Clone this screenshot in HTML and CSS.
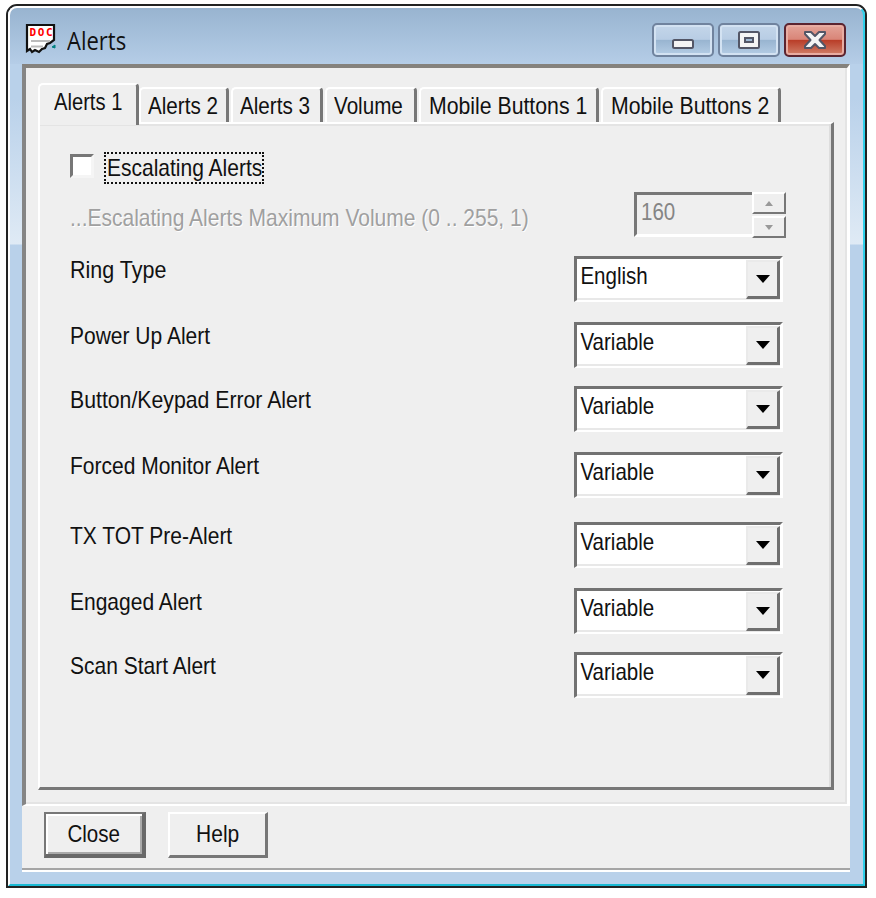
FILE: index.html
```
<!DOCTYPE html>
<html lang="en">
<head>
<meta charset="utf-8">
<title>Alerts</title>
<link rel="stylesheet" href="styles.css">
</head>
<body>
<div class="window">
  <div class="glass">
    <header class="titlebar">
      <svg class="doc" width="32" height="32" viewBox="0 0 32 32">
        <path d="M2 2H29V17L25 20L22 21L20 25L17 26L14 29L10 27L7 29L5 26L2 28Z" fill="#fff" stroke="#111" stroke-width="2.2"/>
        <path d="M6 18H25M6 23.500H18" stroke="#bbb" stroke-width="2"/>
        <path d="M27 24L30 22V25Z" fill="#008080" stroke="#008080"/>
        <text class="doc-text" x="4.500" y="13" textLength="23">DOC</text>
      </svg>
      <h1 class="title">Alerts</h1>
      <div class="captions">
        <span class="cap"><svg width="58" height="30" viewBox="0 0 58 30"><rect x="19" y="15" width="20" height="8" rx="1.500" fill="#f4f4f4" stroke="#535666" stroke-width="2"/></svg></span>
        <span class="cap"><svg width="58" height="30" viewBox="0 0 58 30"><rect x="19" y="7" width="20" height="16" rx="1.500" fill="#f4f4f4" stroke="#535666" stroke-width="2"/><rect x="25" y="13" width="8" height="4" fill="#9fb9d4" stroke="#535666" stroke-width="2"/></svg></span>
        <span class="cap cap-close"><svg width="58" height="30" viewBox="0 0 58 30"><path d="M19 7H25L29 11L33 7H39V9L33.500 15L39 21V23H33L29 19L25 23H19V21L24.500 15L19 9Z" fill="#f4f4f4" stroke="#535666" stroke-width="2" stroke-linejoin="round"/></svg></span>
      </div>
    </header>
    <main class="client">
      <section class="sunken">
        <nav class="tabs">
          <div class="tab active"><span class="t">Alerts 1</span></div>
          <div class="tab t2"><span class="t">Alerts 2</span></div>
          <div class="tab t3"><span class="t">Alerts 3</span></div>
          <div class="tab t4"><span class="t">Volume</span></div>
          <div class="tab wide"><span class="t">Mobile Buttons 1</span></div>
          <div class="tab wide"><span class="t">Mobile Buttons 2</span></div>
        </nav>
        <div class="page">
          <div class="check"><span class="box"></span><span class="focus"><span class="t">Escalating Alerts</span></span></div>
          <div class="volume">
            <span class="t disabled">...Escalating Alerts Maximum Volume (0 .. 255, 1)</span>
            <div class="spin">
              <div class="field"><span class="t tight">160</span></div>
              <div class="steps">
                <span class="step"><svg width="8" height="5"><path d="M0 5L4 0L8 5Z" fill="#999"/></svg></span>
                <span class="step"><svg width="8" height="5"><path d="M0 0H8L4 5Z" fill="#999"/></svg></span>
              </div>
            </div>
          </div>
          <div class="row ring"><span class="t loose">Ring Type</span><div class="combo"><span class="t tight">English</span><span class="drop"></span></div></div>
          <div class="row"><span class="t">Power Up Alert</span><div class="combo"><span class="t tight">Variable</span><span class="drop"></span></div></div>
          <div class="row near"><span class="t button-label">Button/Keypad Error Alert</span><div class="combo"><span class="t tight">Variable</span><span class="drop"></span></div></div>
          <div class="row"><span class="t">Forced Monitor Alert</span><div class="combo"><span class="t tight">Variable</span><span class="drop"></span></div></div>
          <div class="row far"><span class="t">TX TOT Pre-Alert</span><div class="combo"><span class="t tight">Variable</span><span class="drop"></span></div></div>
          <div class="row"><span class="t">Engaged Alert</span><div class="combo"><span class="t tight">Variable</span><span class="drop"></span></div></div>
          <div class="row near"><span class="t">Scan Start Alert</span><div class="combo"><span class="t tight">Variable</span><span class="drop"></span></div></div>
        </div>
      </section>
      <footer class="footer">
        <div class="button default"><span class="t tight">Close</span></div>
        <div class="button"><span class="t">Help</span></div>
      </footer>
    </main>
  </div>
</div>
</body>
</html>
```
FILE: styles.css
```
* { box-sizing: border-box; }
body {
  margin: 0;
  padding: 4px 0 0 6px;
  background: #fff;
  color: #111;
  font: 24px/28px "Liberation Sans", Arial, sans-serif;
}
.window {
  width: 861px;
  height: 884px;
  border: 2px solid #222;
  border-radius: 11px 11px 0 0;
  background: #b9d1ea;
}
.glass {
  height: 880px;
  padding: 0 12px 0 12px;
  border: 2px solid #fff;
  border-right-color: #2fd0ea;
  border-bottom-color: #19b9d3;
  border-radius: 9px 9px 0 0;
  background:
    linear-gradient(#98b4d0, #b5cde7 56px, transparent 56px),
    linear-gradient(#b9d1ea 56px, #b9d1ea 90px, #dfeaf5 236px, #b9d1ea 237px);
}
.titlebar {
  display: flex;
  height: 56px;
  padding: 15px 5px 0 3px;
}
.doc { flex: none; }
.doc-text {
  font: bold 11px "DejaVu Sans Mono", monospace;
  fill: #f00;
}
.title {
  width: 100px;
  margin: 2px auto 0 10px;
  font: 25px/30px "Open Sans", "Noto Sans", sans-serif;
  transform: scaleX(.88);
  transform-origin: left;
}
.captions { display: flex; gap: 4px; }
.cap {
  width: 62px;
  height: 34px;
  border: 2px solid #70839e;
  border-radius: 5px;
  background: linear-gradient(#c4d6ea, #b8cde4 48%, #98b4d0 50%, #b5cde5);
  box-shadow: inset 0 0 0 2px #d3e2f2;
}
.cap svg { display: block; }
.cap-close {
  border-color: #5b2430;
  background: linear-gradient(#e4a499, #d98578 48%, #b93c27 50%, #d0806a);
  box-shadow: inset 0 0 0 2px #e8aca2;
}
.client {
  width: 828px;
  height: 808px;
  background: #efefef;
  border-bottom: 2px solid #fff;
  box-shadow: inset 0 -2px #a5a5a5;
}
.sunken {
  height: 742px;
  padding: 15px 0 0 14px;
  border: solid;
  border-width: 4px 3px 2px 4px;
  border-color: #85827d #fff #fff #858585;
  box-shadow: inset -2px -2px #e4e4e4;
}
.t {
  display: block;
  white-space: nowrap;
  transform: scaleX(.875);
  transform-origin: left;
}
.t.tight { transform: scaleX(.855); }
.t.loose { transform: scaleX(.895); }
.t.button-label { transform: scaleX(.885); }
.tabs {
  display: flex;
  align-items: flex-end;
  gap: 2px;
  height: 39px;
}
.tab {
  width: 90px;
  height: 35px;
  padding: 3px 0 0 7px;
  border: 2px solid #fff;
  border-right: 3px solid #777;
  border-bottom: 0;
  border-radius: 5px 4px 0 0;
}
.tab .t { transform: scaleX(.86); }
.tab.active {
  position: relative;
  width: 101px;
  height: 42px;
  margin: 0 -2px -3px -2px;
  padding: 3px 0 0 14px;
  background: linear-gradient(90deg, #efefef 97px, #efefef);
}
.tab.active .t { transform: scaleX(.84); }
.tab.t3, .tab.t4 { width: 92px; }
.tab.wide { width: 180px; padding-left: 8px; }
.tab.wide .t { transform: scaleX(.885); }
.page {
  width: 796px;
  height: 668px;
  padding: 28px 0 0 30px;
  margin-left: -2px;
  border: 2px solid #fff;
  border-right: 3px solid #777;
  border-bottom: 3px solid #777;
  box-shadow: inset -2px 0 #ddd, inset 0 2px #e4e4e4;
}
.check { display: flex; gap: 10px; height: 32px; }
.box {
  width: 24px;
  height: 24px;
  margin-top: 2px;
  background: #fff;
  border: 3px solid #777;
  border-right-color: #f5f5f5;
  border-bottom-color: #f5f5f5;
}
.focus {
  width: 160px;
  height: 32px;
  padding-left: 1px;
  border: 2px dotted #111;
}
.volume { display: flex; justify-content: space-between; width: 716px; height: 46px; margin-top: 8px; }
.disabled { width: 560px; margin-top: 12px; color: #a0a0a0; text-shadow: 1px 1px #fff; }
.spin { display: flex; flex: none; width: 152px; height: 46px; }
.field {
  width: 118px;
  height: 45px;
  padding: 3px 0 0 4px;
  border: 3px solid #777;
  border-right: 0;
  border-bottom-color: #fff;
  color: #858585;
}
.steps { display: flex; flex-direction: column; gap: 2px; }
.step {
  display: flex;
  align-items: center;
  justify-content: center;
  width: 34px;
  height: 22px;
  border: 2px solid #fff;
  border-right-color: #777;
  border-bottom-color: #777;
}
.row { display: flex; justify-content: space-between; width: 713px; height: 46px; margin-top: 20px; }
.ring { margin-top: 18px; }
.near { margin-top: 18px; }
.far { margin-top: 24px; }
.combo {
  display: flex;
  justify-content: space-between;
  flex: none;
  width: 209px;
  height: 46px;
  border: 3px solid #727272;
  border-right: 3px solid #fff;
  border-bottom: 2px solid #fff;
  background: #fff;
  box-shadow: inset 0 -2px #e8e8e8;
}
.combo .t { padding-left: 4px; margin-top: 3px; }
.drop {
  display: flex;
  align-items: center;
  justify-content: center;
  width: 34px;
  height: 39px;
  margin-top: 1px;
  background: #efefef;
  border: 2px solid #eaeaea;
  border-right: 3px solid #6f6f6f;
  border-bottom: 3px solid #6f6f6f;
}
.drop::before {
  content: "";
  border: 7px solid transparent;
  border-top: 8px solid #000;
  border-bottom: 0;
}
.footer { display: flex; gap: 22px; padding: 6px 0 0 22px; }
.button {
  display: flex;
  justify-content: center;
  width: 100px;
  height: 46px;
  padding-top: 6px;
  border: 2px solid #fff;
  border-right: 3px solid #777;
  border-bottom: 3px solid #777;
}
.button .t { transform-origin: center; }
.button.default {
  width: 102px;
  border: 2px solid #777;
  border-right: 4px solid #696969;
  border-bottom: 4px solid #696969;
  box-shadow: inset 2px 2px #fff, inset -2px -2px #aaa;
}
```
